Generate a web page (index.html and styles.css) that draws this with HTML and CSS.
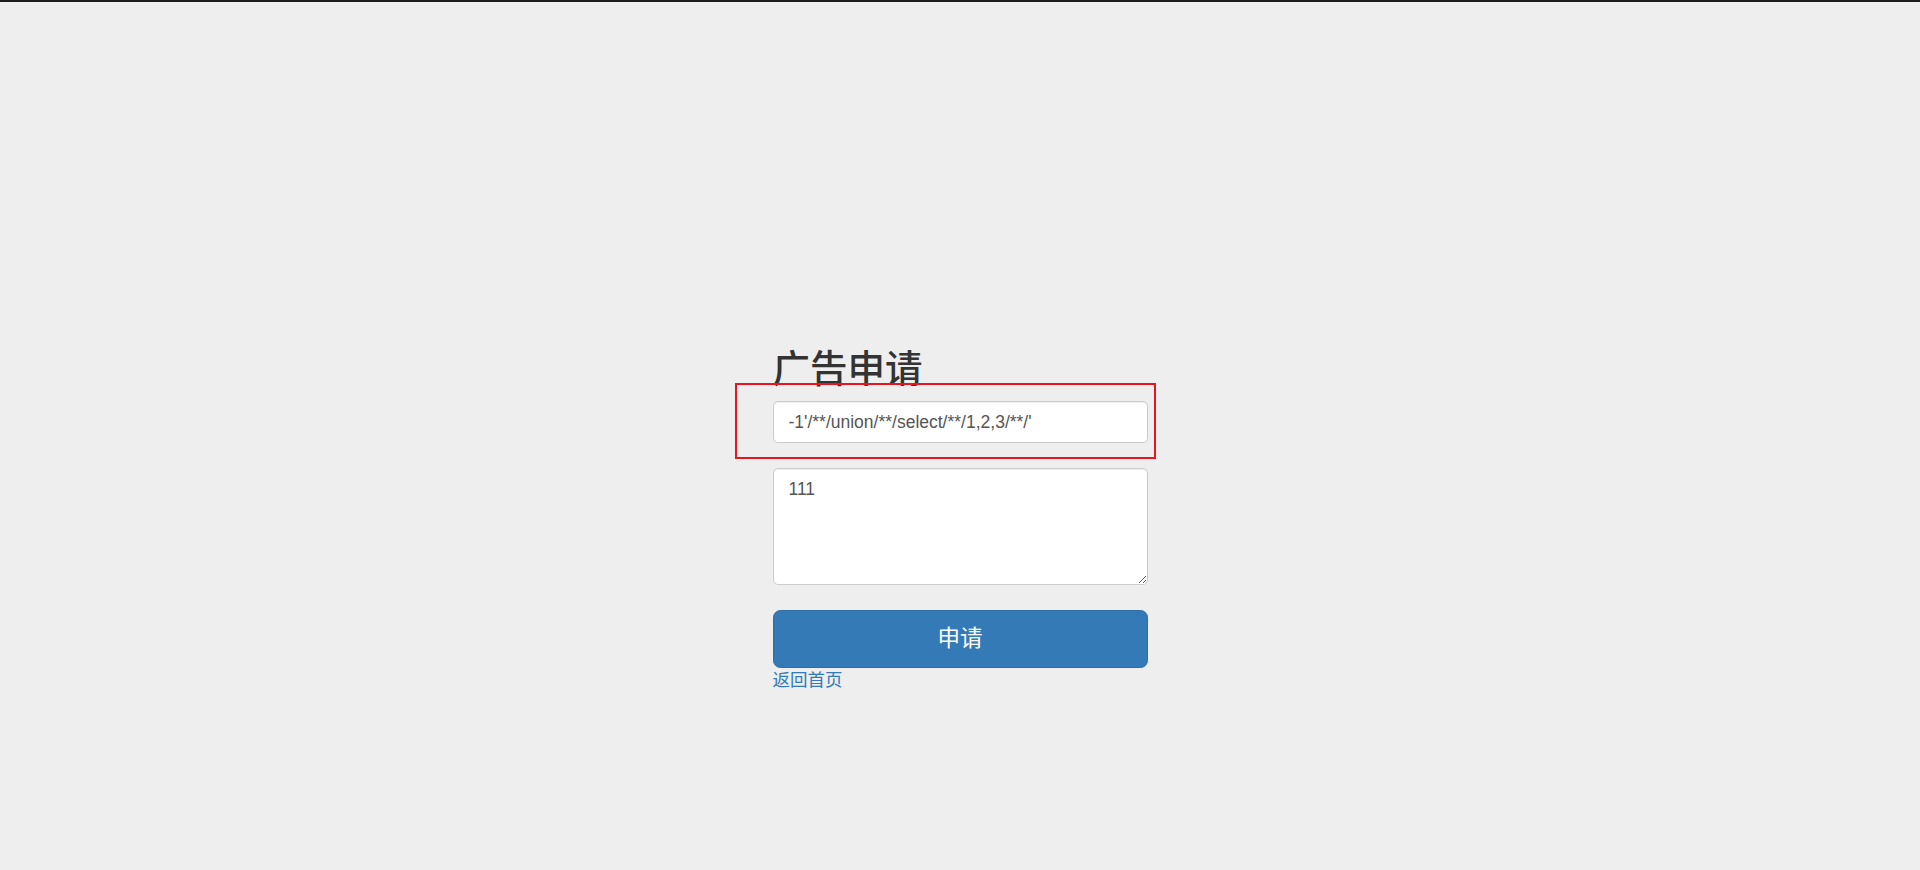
FILE: index.html
```html
<!DOCTYPE html>
<html lang="zh-CN">
<head>
<meta charset="utf-8">
<title>广告申请</title>
<link rel="stylesheet" href="styles.css">
</head>
<body>
<div class="topbar"></div>
<main class="page">
  <form class="form">
    <h2 class="title">广告申请</h2>
    <div class="field">
      <input class="control" type="text" value="-1'/**/union/**/select/**/1,2,3/**/'">
      <span class="mark"></span>
    </div>
    <textarea class="control area">111</textarea>
    <button class="btn" type="button">申请</button>
    <a class="back" href="#">返回首页</a>
  </form>
</main>
</body>
</html>
```
FILE: styles.css
```css
html, body {
  margin: 0;
  padding: 0;
  background: #eeeeee;
  height: 100%;
}
body {
  font-family: "Liberation Sans", Arial, "Noto Sans CJK SC", sans-serif;
  color: #333;
  overflow: hidden;
}
.topbar {
  height: 2px;
  background: #1c1c1c;
}
.page {
  display: flex;
  justify-content: center;
  padding-top: 347px;
}
.form {
  width: 375px;
  display: flex;
  flex-direction: column;
}
.title {
  margin: 0 0 10.5px;
  font-size: 37.5px;
  line-height: 1.1;
  font-weight: 500;
  color: #333;
  font-family: "Liberation Sans", "Noto Sans CJK SC", sans-serif;
}
.field {
  position: relative;
}
.control {
  display: block;
  box-sizing: border-box;
  width: 100%;
  height: 42.5px;
  padding: 7.5px 15px;
  font-family: "Liberation Sans", Arial, "Noto Sans CJK SC", sans-serif;
  font-size: 17.5px;
  line-height: 25px;
  color: #555;
  background: #fff;
  border: 1px solid #ccc;
  border-radius: 5px;
  box-shadow: inset 0 1px 1px rgba(0,0,0,.075);
  margin: 0;
}
.mark {
  position: absolute;
  left: -38px;
  top: -18px;
  right: -8px;
  bottom: -16px;
  border: 2px solid #e8141f;
  pointer-events: none;
}
.area {
  margin-top: 25px;
  height: 116.5px;
  resize: both;
}
.btn {
  margin-top: 25.5px;
  height: 57.5px;
  width: 100%;
  box-sizing: border-box;
  background: #337ab7;
  border: 1px solid #2e6da4;
  border-radius: 7.5px;
  color: #fff;
  font-size: 22.5px;
  font-family: "Liberation Sans", "Noto Sans CJK SC", sans-serif;
  line-height: 1.33;
  padding: 12.5px 20px;
}
.back {
  display: block;
  font-size: 17.5px;
  line-height: 25px;
  color: #337ab7;
  text-decoration: none;
  font-family: "Liberation Sans", "Noto Sans CJK SC", sans-serif;
}
```
